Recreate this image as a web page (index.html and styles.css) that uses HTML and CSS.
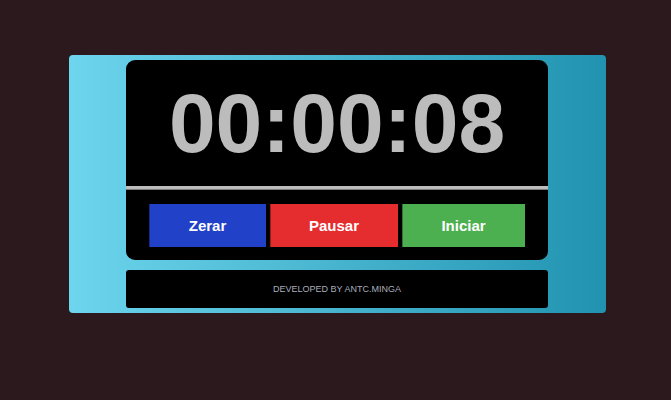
FILE: index.html
```html
<!DOCTYPE html>
<html lang="pt">
<head>
<meta charset="utf-8">
<title>Cronômetro</title>
<link rel="stylesheet" href="styles.css">
</head>
<body>
<div class="panel">
  <div class="card">
    <div class="time">00:00:08</div>
    <div class="sep"></div>
    <div class="buttons">
      <button class="btn btn-reset">Zerar</button>
      <button class="btn btn-pause">Pausar</button>
      <button class="btn btn-start">Iniciar</button>
    </div>
  </div>
  <div class="footer">DEVELOPED BY ANTC.MINGA</div>
</div>
</body>
</html>
```

FILE: styles.css
```css
html, body {
  margin: 0;
  padding: 0;
  background: #2b191e;
  font-family: "Liberation Sans", Arial, sans-serif;
}
body {
  padding-top: 55px;
  height: 400px;
  box-sizing: border-box;
}
.panel {
  margin-left: 69px;
  width: 537px;
  box-sizing: border-box;
  padding: 5px 0 5px 57px;
  border-radius: 4px;
  background: linear-gradient(to right, #6dd5ed, #2193b0);
  display: flex;
  flex-direction: column;
  align-items: flex-start;
  gap: 10px;
}
.card {
  width: 422px;
  background: #000;
  border-radius: 9px;
  padding: 20px 0 13px;
  display: flex;
  flex-direction: column;
}
.time {
  font-size: 84px;
  line-height: 86px;
  height: 86px;
  font-weight: bold;
  color: #bcbcbc;
  text-align: center;
}
.sep {
  margin-top: 20px;
  height: 3px;
  background: #bcbcbc;
  border-bottom: 1px solid #7c7c7c;
}
.buttons {
  margin-top: 14px;
  display: flex;
  justify-content: center;
  gap: 4px;
}
.btn {
  height: 43px;
  border: none;
  padding: 0;
  color: #fff;
  font-family: "Liberation Sans", Arial, sans-serif;
  font-size: 15px;
  font-weight: bold;
  box-shadow: inset 1px 0 0 rgba(0, 0, 0, 0.35);
}
.btn-reset { width: 117px; background: #2141c8; }
.btn-pause { width: 128px; background: #e52d2f; }
.btn-start { width: 123px; background: #4caf50; }
.footer {
  width: 422px;
  height: 38px;
  background: #000;
  border-radius: 3px;
  color: #a9aeb9;
  font-size: 9px;
  display: flex;
  align-items: center;
  justify-content: center;
}
```
